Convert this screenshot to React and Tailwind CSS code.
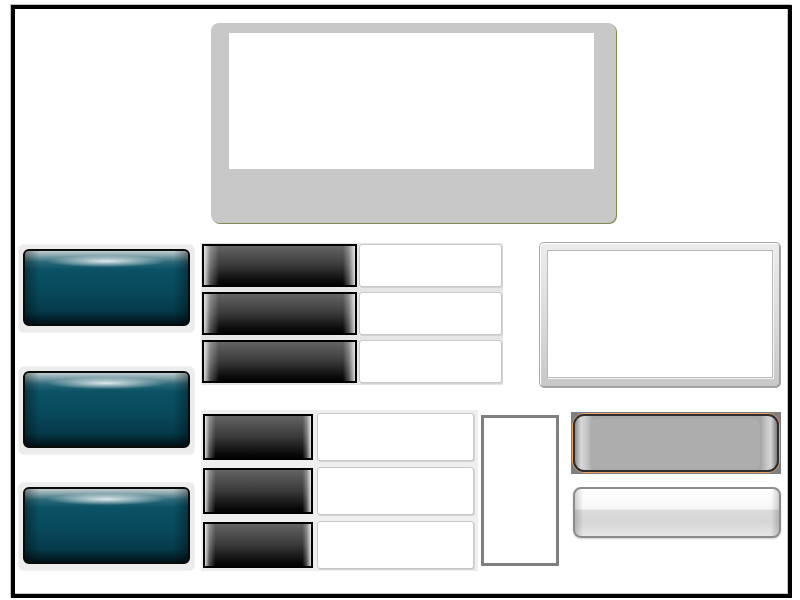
import React from "react";

function TealButton({ className = "" }) {
  return (
    <div className={"w-[175px] h-[87px] rounded-[5px] bg-[#ececec] shadow-[0_0_2px_#d0d0d0] pt-[4px] pl-[4px] " + className}>
      <div className="w-[167px] h-[77px] rounded-[6px] border-2 border-[#0a0a0a] overflow-hidden bg-[linear-gradient(to_bottom,#c0cccf_0%,#7fa0a8_7%,#2b6a7a_15%,#0b5266_25%,#08495c_55%,#053a4a_82%,#011219_100%)]">
        <div className="w-full h-full bg-[linear-gradient(to_right,rgba(0,0,0,0.35),rgba(0,0,0,0)_9%,rgba(0,0,0,0)_91%,rgba(0,0,0,0.35))]">
          <div className="w-full h-full bg-[radial-gradient(60px_6px_at_50%_14%,rgba(255,255,255,0.85),rgba(255,255,255,0))]" />
        </div>
      </div>
    </div>
  );
}

function DarkButton({ w, h }) {
  return (
    <div className={"border-2 border-black bg-linear-to-b from-[#646464] via-[#3a3a3a] to-[#030303] " + w + " " + h}>
      <div className="w-full h-full bg-[linear-gradient(to_right,rgba(255,255,255,0.85),rgba(255,255,255,0.3)_4%,rgba(255,255,255,0)_10%,rgba(255,255,255,0)_92%,rgba(255,255,255,0.3)_96%,rgba(255,255,255,0.85))]" />
    </div>
  );
}

function WhiteBox({ w, h }) {
  return <div className={"bg-white rounded-[3px] border border-[#c8c8c8] shadow-[1px_1px_0_#d4d4d4] " + w + " " + h} />;
}

export default function App() {
  return (
    <div className="w-[800px] h-[600px] bg-white pt-[5px] pl-[11px]">
      <div className="w-[781px] h-[593px] border-[4px] border-black shadow-[-1px_-1px_0_#c4c4c4,inset_-1px_-1px_0_#c4c4c4] bg-white flex flex-col">
        <div className="ml-[196px] mt-[14px] w-[405px] h-[200px] rounded-[8px] bg-[#c8c8c8] shadow-[1px_1px_0_#7d8c55] pl-[18px] pt-[10px]">
          <div className="w-[365px] h-[136px] bg-white" />
        </div>

        <div className="mt-[19px] flex">
          <div className="ml-[4px] w-[175px] flex flex-col">
            <TealButton className="mt-[3px]" />
            <TealButton className="mt-[35px]" />
            <TealButton className="mt-[29px]" />
          </div>

          <div className="ml-[7px] flex flex-col">
            <div className="flex">
              <div className="mt-[1px] w-[302px] h-[142px] bg-[#e6e6e6] pt-[1px] pl-[1px] flex flex-col gap-[5px]">
                {[0, 1, 2].map((i) => (
                  <div key={i} className="flex gap-[2px]">
                    <DarkButton w="w-[155px]" h="h-[43px]" />
                    <WhiteBox w="w-[143px]" h="h-[43px]" />
                  </div>
                ))}
              </div>
              <div className="ml-[36px] w-[242px] h-[146px] rounded-[5px] border border-[#a8a8a8] bg-linear-to-b from-[#ececec] via-[#dcdcdc] to-[#c8c8c8] shadow-[inset_1px_1px_0_#ffffff,inset_-1px_-1px_0_#9c9c9c] pt-[7px] pl-[7px]">
                <div className="w-[226px] h-[128px] bg-white border border-[#b8b8b8] shadow-[1px_1px_0_#f4f4f4]" />
              </div>
            </div>

            <div className="mt-[22px] flex">
              <div className="w-[277px] h-[161px] bg-[#efefef] pt-[2px] pl-[2px] flex flex-col gap-[5px]">
                {[0, 1, 2].map((i) => (
                  <div key={i} className="flex items-center gap-[4px] h-[49px]">
                    <DarkButton w="w-[110px]" h="h-[46px]" />
                    <WhiteBox w="w-[157px]" h="h-[48px]" />
                  </div>
                ))}
              </div>
              <div className="ml-[3px] mt-[5px] w-[78px] h-[151px] border-[3px] border-[#808080] bg-white" />
              <div className="ml-[12px] mt-[2px] flex flex-col">
                <div className="w-[210px] h-[62px] bg-[#7f7f7f] pl-[1px] pt-[1px]">
                  <div className="w-[208px] h-[60px] rounded-[12px] border border-[#e8a262]">
                    <div className="w-full h-full rounded-[11px] border-2 border-[#2e2e2e] bg-[linear-gradient(to_right,#8e8e8e,#d8d8d8_3%,#c4c4c4_6%,#a6a6a6_9%,#a6a6a6_92%,#c8c8c8_95%,#d4d4d4_97%,#7a7a7a)] pl-[15px] pt-[3px]">
                      <div className="w-[170px] h-[51px] rounded-[7px] bg-[#adadad]" />
                    </div>
                  </div>
                </div>
                <div className="ml-[2px] mt-[13px] w-[208px] h-[51px] rounded-[8px] border-2 border-[#8c8c8c] overflow-hidden bg-[linear-gradient(to_bottom,#ffffff_0%,#f8f8f8_38%,#f4f4f4_40%,#fcfcfc_42%,#dcdcdc_45%,#d6d6d6_70%,#e6e6e6_100%)] shadow-[0_1px_2px_#d0d0d0]">
                  <div className="w-full h-full bg-[linear-gradient(to_right,rgba(0,0,0,0.18),rgba(0,0,0,0)_4%,rgba(0,0,0,0)_96%,rgba(0,0,0,0.18))]" />
                </div>
              </div>
            </div>
          </div>
        </div>
      </div>
    </div>
  );
}
